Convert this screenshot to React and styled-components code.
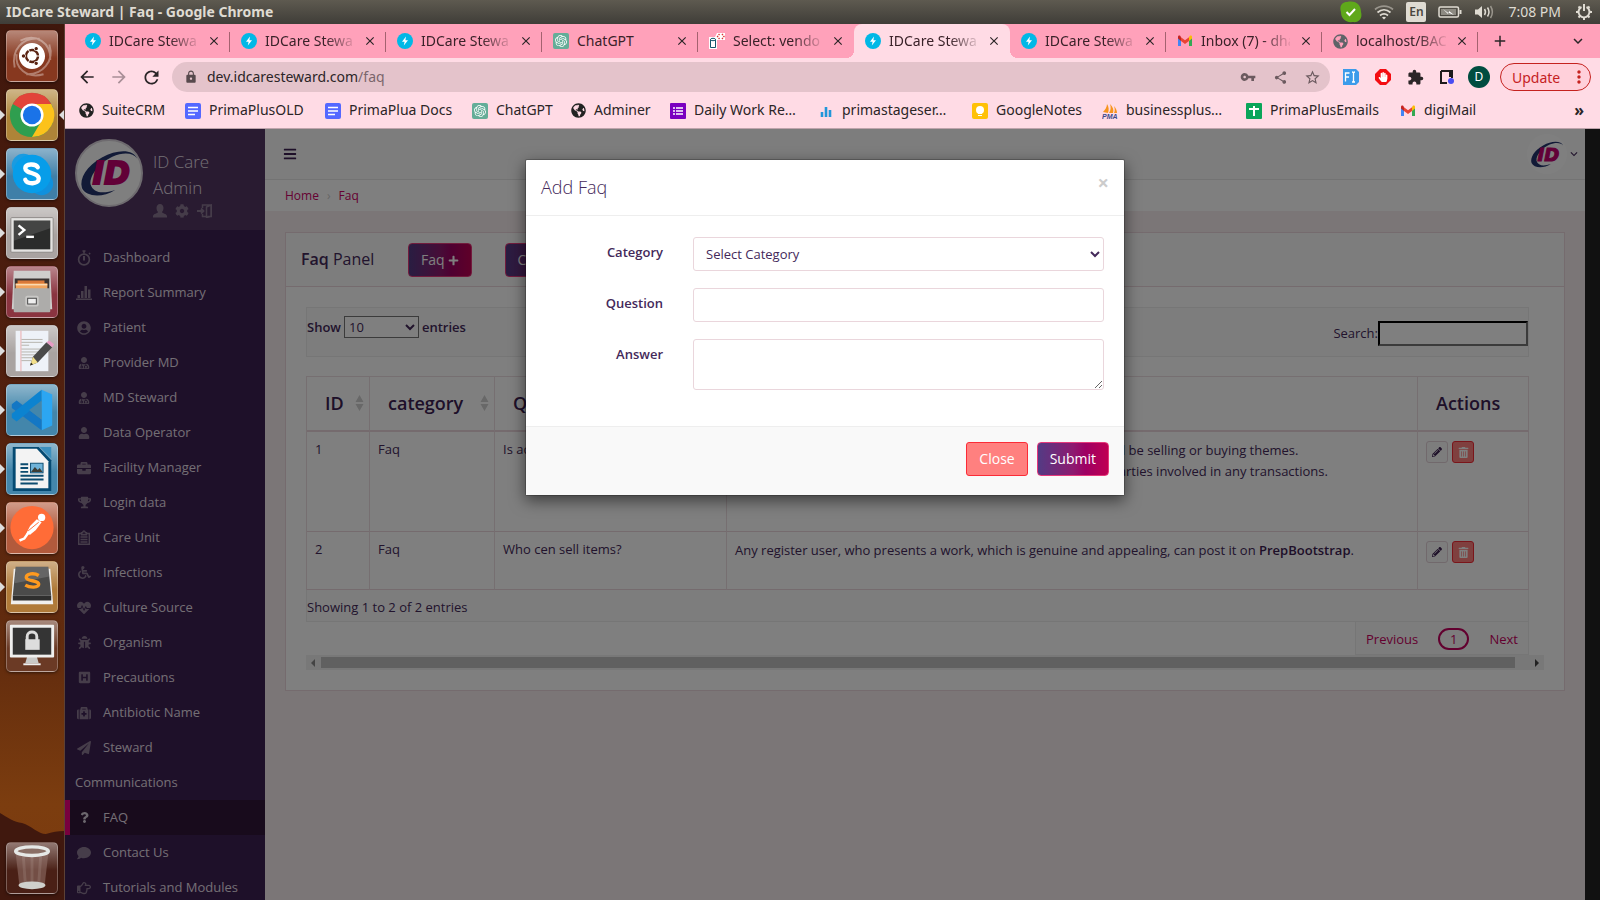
import React from "react";
import styled, { createGlobalStyle, css } from "styled-components";
import {
  FaUserMd, FaUser, FaBriefcase, FaTrophy, FaWheelchair, FaHeartbeat, FaBug, FaHSquare,
  FaMedkit, FaPaperPlane, FaQuestion, FaComment, FaRegHandPointRight, FaUserCircle, FaUbuntu,
  FaCog, FaBars, FaPlus, FaPencilAlt, FaTrashAlt, FaGlobeAmericas, FaHandPaper,
} from "react-icons/fa";
import {
  MdArrowBack, MdArrowForward, MdRefresh, MdLock, MdVpnKey, MdShare, MdStarBorder, MdExtension,
  MdClose, MdAdd, MdKeyboardArrowDown, MdMoreVert,
} from "react-icons/md";
import { SiOpenai } from "react-icons/si";

const GlobalStyle = createGlobalStyle`
  *, *::before, *::after { box-sizing: border-box; }
  body { margin: 0; background: #1e1029; }
  button, input, select, textarea { font: inherit; color: inherit; }
  a { color: inherit; text-decoration: none; }
  svg { display: block; flex: none; }
`;

const chromeFont = `"Noto Sans", "Open Sans", sans-serif`;
const pageFont = `"Open Sans", "Noto Sans", sans-serif`;

/* ---------- desktop shell ---------- */

const Desktop = styled.div`
  display: flex;
  flex-direction: column;
  height: 100vh;
  overflow: hidden;
  font-family: ${chromeFont};
`;

const SystemBar = styled.header`
  display: flex;
  align-items: center;
  justify-content: space-between;
  flex: none;
  height: 24px;
  padding: 0 7px 0 6px;
  background: linear-gradient(#5e5a50, #3f3d38);
  color: #dfdbd2;
  font-size: 14px;
`;

const WindowTitle = styled.strong`
  padding-bottom: 2px;
  font-weight: 700;
`;

const Indicators = styled.div`
  display: flex;
  align-items: center;
  gap: 12px;
`;

const Clock = styled.span`
  padding: 0 2px 2px;
`;

const InputLanguage = styled.span`
  width: 20px;
  height: 20px;
  border-radius: 2px;
  background: #dfdbd2;
  color: #4a4740;
  font-size: 12px;
  font-weight: 600;
  line-height: 20px;
  text-align: center;
`;

const Workspace = styled.div`
  display: flex;
  flex: 1;
  min-height: 0;
`;

const Launcher = styled.nav`
  position: relative;
  display: flex;
  flex-direction: column;
  flex: none;
  gap: 7px;
  width: 65px;
  padding: 6px;
  border-right: 1px solid #5c4136;
  background: linear-gradient(#3f170c 0, #4a1c0e 220px, #55230f 420px, #642d0e 640px, #7c3d0f 780px, #7a3a10 100%);
`;

const Hills = styled.svg`
  position: absolute;
  left: 0;
  bottom: 0;
  width: 64px;
  height: 94px;
`;

const LauncherItem = styled.button`
  position: relative;
  width: 52px;
  height: 52px;
  padding: 0;
  border: 1px solid rgba(255, 255, 255, 0.28);
  border-radius: 5px;
  background: linear-gradient(rgba(255, 255, 255, 0.4), rgba(255, 255, 255, 0) 55%), ${(p) => p.$tint};
  box-shadow: 0 1px 3px rgba(0, 0, 0, 0.5);
  ${(p) => p.$last && css`margin-top: auto;`}

  ${(p) => p.$running && css`
    &::before {
      content: "";
      position: absolute;
      left: -7px;
      top: 20px;
      border: 5px solid transparent;
      border-left-color: #ddd;
      border-right: 0;
    }
  `}
  ${(p) => p.$focused && css`
    &::after {
      content: "";
      position: absolute;
      right: -7px;
      top: 20px;
      border: 5px solid transparent;
      border-right-color: #ddd;
      border-left: 0;
    }
  `}
`;

/* ---------- browser ---------- */

const Browser = styled.div`
  display: flex;
  flex: 1;
  flex-direction: column;
  min-width: 0;
  background: #ffdbe5;
  color: #2b2527;
`;

const TabStrip = styled.div`
  display: flex;
  align-items: center;
  flex: none;
  height: 34px;
  padding: 0 12px 0 9px;
  background: #ffa1ba;
  color: #3a2229;
`;

const Tab = styled.div`
  position: relative;
  display: flex;
  align-items: center;
  gap: 8px;
  flex: 0 1 156px;
  min-width: 0;
  height: 34px;
  padding: 0 8px 0 11px;
  font-size: 14px;

  ${(p) => p.$divider && css`
    &::after {
      content: "";
      position: absolute;
      right: 0;
      top: 8px;
      width: 1px;
      height: 20px;
      background: #a4626f;
    }
  `}
  ${(p) => p.$active && css`
    border-radius: 8px 8px 0 0;
    background: #ffdbe5;
    &::before, &::after {
      content: "";
      position: absolute;
      bottom: 0;
      width: 8px;
      height: 8px;
    }
    &::before {
      left: -8px;
      background: radial-gradient(circle at 0 0, transparent 8px, #ffdbe5 8px);
    }
    &::after {
      right: -8px;
      background: radial-gradient(circle at 100% 0, transparent 8px, #ffdbe5 8px);
    }
  `}
`;

const TabTitle = styled.span`
  flex: 1;
  min-width: 0;
  padding-bottom: 2px;
  overflow: hidden;
  white-space: nowrap;
  ${(p) => p.$fade && css`mask-image: linear-gradient(to right, #000 68%, transparent 104%);`}
`;

const IconButton = styled.button`
  display: flex;
  align-items: center;
  justify-content: center;
  flex: none;
  width: ${(p) => p.$w || 16}px;
  height: ${(p) => p.$w || 16}px;
  padding: 0;
  border: 0;
  background: none;
  color: ${(p) => p.$color || "#2b2527"};
`;

const TabMenu = styled(IconButton)`
  margin-left: auto;
`;

const Toolbar = styled.div`
  display: flex;
  align-items: center;
  flex: none;
  gap: 10px;
  height: 38px;
  padding: 0 9px 0 11px;
`;

const Omnibox = styled.div`
  display: flex;
  align-items: center;
  flex: 1;
  gap: 9px;
  height: 30px;
  padding: 0 7px 0 12px;
  border-radius: 15px;
  background: #e4c3cb;
  color: #57494d;
`;

const Address = styled.div`
  flex: 1;
  padding-bottom: 2px;
  color: #2b2527;
  font-size: 14px;
  span { color: #7a666b; }
`;

const OmniActions = styled.div`
  display: flex;
  gap: 10px;
`;

const Extensions = styled.div`
  display: flex;
  align-items: center;
  gap: 10px;
`;

const Profile = styled.button`
  width: 22px;
  height: 22px;
  padding: 0;
  border: 0;
  border-radius: 50%;
  background: #004d40;
  color: #fff;
  font-size: 12px;
  line-height: 22px;
`;

const UpdateButton = styled.button`
  display: flex;
  align-items: center;
  justify-content: space-between;
  width: 91px;
  height: 28px;
  padding: 0 1px 0 11px;
  border: 1px solid #c5221f;
  border-radius: 14px;
  background: #ffd0da;
  color: #c5221f;
  font-size: 14px;
`;

const Bookmarks = styled.div`
  display: flex;
  align-items: center;
  flex: none;
  height: 33px;
  padding: 0 16px 3px 14px;
  border-bottom: 1px solid #bfa4ac;
  font-size: 14px;
`;

const Bookmark = styled.a`
  display: flex;
  align-items: center;
  flex: 0 1 ${(p) => p.$w}px;
  gap: 8px;
  white-space: nowrap;
  span { padding-bottom: 2px; }
`;

const MoreBookmarks = styled.button`
  margin-left: auto;
  padding: 0 0 2px;
  border: 0;
  background: none;
  font-size: 16px;
  font-weight: 700;
  line-height: 20px;
`;

/* ---------- site ---------- */

const Viewport = styled.div`
  display: flex;
  flex: 1;
  min-height: 0;
`;

const Site = styled.div`
  position: relative;
  display: flex;
  flex: 1;
  min-width: 0;
  overflow: hidden;
  background: #f6ecee;
  color: #44295a;
  font-family: ${pageFont};
  font-size: 13px;
  line-height: 19px;
`;

const PageScroll = styled.div`
  flex: none;
  width: 15px;
  background: #111;
`;

const Sidebar = styled.aside`
  flex: none;
  width: 200px;
  background: #3c2052;
  color: #e6dfe8;
`;

const UserCard = styled.div`
  display: flex;
  gap: 10px;
  height: 101px;
  padding: 10px;
  background: #523662;
`;

const UserName = styled.div`
  padding-top: 10px;
  font-size: 17px;
  font-weight: 300;
  line-height: 26px;
`;

const UserActions = styled.div`
  display: flex;
  gap: 8px;
  padding-top: 3px;
  color: #8b7893;
`;

const Menu = styled.ul`
  margin: 0;
  padding: 10px 0 0;
  list-style: none;
`;

const MenuLink = styled.a`
  display: block;
  padding: 0 15px 0 ${(p) => (p.$active ? 5 : 10)}px;
  line-height: 35px;
  ${(p) => p.$active && css`
    border-left: 5px solid #f0007c;
    background: #301638;
  `}
`;

const MenuIcon = styled.span`
  display: inline-flex;
  justify-content: center;
  width: 18px;
  margin-right: 10px;
  padding-bottom: 2px;
  vertical-align: middle;
  color: ${(p) => (p.$active ? "#d8cfdc" : "#8c7a94")};
`;

const Main = styled.main`
  flex: 1;
  min-width: 0;
`;

const SiteBar = styled.div`
  display: flex;
  align-items: center;
  justify-content: space-between;
  height: 51px;
  padding: 0 4px 0 18px;
  border-bottom: 1px solid #e6e6e6;
  background: #fafafa;
`;

const AccountButton = styled.button`
  display: flex;
  align-items: center;
  padding: 0;
  border: 0;
  background: none;
`;

const LogoDisc = styled.span`
  display: flex;
  align-items: center;
  justify-content: center;
  flex: none;
  width: ${(p) => p.$size}px;
  height: ${(p) => p.$size}px;
  border-radius: 50%;
  background: #fff;
  ${(p) => p.$ring && css`border: 2px solid #dcd6de;`}
`;

const Breadcrumb = styled.nav`
  display: flex;
  align-items: center;
  gap: 8px;
  height: 31px;
  padding: 0 20px;
  background: #fff;
  color: #cc0066;
  font-size: 12px;
  span { color: #ccc; }
`;

const Panel = styled.section`
  margin: 21px 20px;
  border: 1px solid #ead6dc;
  background: #fff;
`;

const PanelHead = styled.div`
  display: flex;
  align-items: center;
  height: 54px;
  padding: 0 15px;
  border-bottom: 1px solid #ead6dc;
  background: #fafafa;
`;

const PanelTitle = styled.h1`
  width: 107px;
  margin: 0;
  padding-bottom: 2px;
  font-size: 16px;
  font-weight: 400;
  line-height: 22px;
  b { font-weight: 600; }
`;

const HeadButtons = styled.div`
  display: flex;
  gap: 33px;
  padding-top: 1px;
`;

const GradientButton = styled.button`
  display: flex;
  align-items: center;
  gap: 3px;
  height: 34px;
  padding: 0 12px;
  border: 1px solid #e5397b;
  border-radius: 4px;
  background: linear-gradient(90deg, #533b84 0, #8d1a70 50%, #9e0063 68%, #bf0052 100%);
  color: #fff;
  font-size: 14px;
  line-height: 20px;
`;

const PanelBody = styled.div`
  padding: 20px;
`;

const TableArea = styled.div`
  padding-right: 15px;
`;

const Filters = styled.div`
  display: flex;
  justify-content: space-between;
  height: 50px;
  margin-bottom: 19px;
  border: 1px solid #ececec;
  background: #fafafa;
`;

const LengthFilter = styled.label`
  display: flex;
  align-items: center;
  gap: 3px;
  height: 38px;
  font-weight: 600;
`;

const LengthSelect = styled.select`
  width: 75px;
  height: 22px;
  padding: 0;
  border: 1px solid #767676;
  border-radius: 0;
  background-color: #fff;
  font-weight: 400;
`;

const SearchFilter = styled.label`
  display: flex;
  align-items: center;
  padding-top: 2px;
`;

const SearchInput = styled.input`
  width: 150px;
  height: 25px;
  padding: 1px 2px;
  border: 2px inset #767676;
  border-color: #222 #767676 #767676 #222;
  background: #fff;
`;

const DataTable = styled.table`
  width: 100%;
  table-layout: fixed;
  border-collapse: separate;
  border-spacing: 0;
  border: 1px solid #ecdfe3;
  border-width: 1px 0 0 1px;
`;

const HeadCell = styled.th`
  height: 55px;
  padding: 0 5px 2px 18px;
  border-right: 1px solid #ecdfe3;
  border-bottom: 2px solid #ead6dc;
  color: #3c2052;
  font-size: 18px;
  font-weight: 600;
  line-height: 24px;
  text-align: left;
`;

const HeadLabel = styled.div`
  display: flex;
  align-items: center;
  justify-content: space-between;
`;

const Cell = styled.td`
  height: ${(p) => p.$h}px;
  padding: 8px;
  border-right: 1px solid #ecdfe3;
  border-bottom: 1px solid #ead6dc;
  vertical-align: top;
  p { margin: 0; line-height: 21px; }
  b { font-weight: 600; color: #3c2052; }
`;

const RowActions = styled.div`
  display: flex;
  gap: 4px;
  padding-top: 1px;
`;

const RowButton = styled.button`
  display: flex;
  align-items: center;
  justify-content: center;
  width: 22px;
  height: 22px;
  padding: 0;
  border: 1px solid ${(p) => (p.$danger ? "#f52a35" : "#e3d2d8")};
  border-radius: 3px;
  background: ${(p) => (p.$danger ? "#ff807f" : "#fafafa")};
  color: ${(p) => (p.$danger ? "#fff" : "#3c2052")};
`;

const TableInfo = styled.div`
  height: 32px;
  padding: 8px 0 0;
  border: 1px solid #ececec;
  border-top: 0;
  background: #fafafa;
`;

const Pagination = styled.div`
  display: flex;
  align-items: center;
  justify-content: space-between;
  width: 174px;
  height: 33px;
  margin-left: auto;
  padding: 2px 10px 0;
  border: 1px solid #ececec;
  border-top: 0;
  background: #fafafa;
  color: #c8005f;
`;

const CurrentPage = styled.a`
  width: 31px;
  height: 22px;
  border: 2px solid #c4005e;
  border-radius: 11px;
  line-height: 18px;
  text-align: center;
`;

const ScrollTrack = styled.div`
  display: flex;
  align-items: center;
  justify-content: space-between;
  height: 15px;
  padding: 0 5px;
  background: #f1f1f1;
`;

const ScrollThumb = styled.div`
  flex: 1;
  height: 11px;
  margin: 0 20px 0 6px;
  background: #c1c1c1;
`;

/* ---------- dialog ---------- */

const Backdrop = styled.div`
  position: absolute;
  inset: 0;
  background: rgba(0, 0, 0, 0.5);
`;

const DialogLayer = styled.div`
  position: absolute;
  inset: 0;
  padding: 30px 20px;
`;

const Dialog = styled.form`
  max-width: 600px;
  margin: 0 auto;
  border: 1px solid rgba(0, 0, 0, 0.2);
  border-radius: 2px;
  background: #fff;
  background-clip: padding-box;
  box-shadow: 0 5px 15px rgba(0, 0, 0, 0.5);
`;

const DialogHead = styled.div`
  display: flex;
  align-items: flex-start;
  justify-content: space-between;
  height: 56px;
  padding: 15px;
  border-bottom: 1px solid #eee;
`;

const DialogTitle = styled.h2`
  margin: 0;
  font-size: 18px;
  font-weight: 300;
  line-height: 24px;
`;

const DialogClose = styled.button`
  padding: 0;
  border: 0;
  background: none;
  color: #ccc;
  font-size: 20px;
  font-weight: 700;
  line-height: 16px;
`;

const DialogBody = styled.div`
  display: flex;
  flex-direction: column;
  gap: 17px;
  padding: 21px 20px 36px;
`;

const Field = styled.div`
  display: grid;
  grid-template-columns: 117px 1fr;
  column-gap: 30px;
  label {
    padding-top: 6px;
    font-weight: 600;
    text-align: right;
  }
`;

const control = css`
  display: block;
  width: 100%;
  height: 34px;
  padding: 6px 12px;
  border: 1px solid #ead6dc;
  border-radius: 3px;
  background-color: #fff;
`;

const SelectControl = styled.select`
  ${control}
  padding: 6px 8px;
`;
const TextControl = styled.input`${control}`;
const AreaControl = styled.textarea`
  ${control}
  height: 51px;
  resize: vertical;
`;

const DialogFoot = styled.div`
  display: flex;
  align-items: center;
  justify-content: flex-end;
  gap: 9px;
  height: 69px;
  padding: 0 15px 5px;
  border-top: 1px solid #eee;
  background: #f9f9f9;
`;

const CloseButton = styled.button`
  height: 34px;
  padding: 0 12px;
  border: 1px solid #fb2b37;
  border-radius: 3px;
  background: #ff807f;
  color: #fff;
  font-size: 14px;
  line-height: 20px;
`;

/* ---------- drawings ---------- */

const Logo = ({ width }) => (
  <svg width={width} height={(width * 48) / 60} viewBox="0 0 60 48" overflow="visible" aria-label="ID Care">
    <path d="M59 9C55-1 38-1 22 8C6 17-2 30 1 40C5 49 22 51 36 42C24 46 13 46 10 36C9 26 20 13 33 7C45 2 55 3 59 9Z" fill="#25356f" />
    <text x="12" y="36" fontFamily="DejaVu Sans, sans-serif" fontSize="33" fontWeight="700" fontStyle="italic" fill="#c4006f" stroke="#c4006f" strokeWidth="2">ID</text>
  </svg>
);

const Bolt = () => (
  <svg width="16" height="16" viewBox="0 0 16 16"><circle cx="8" cy="8" r="8" fill="#00b8e6" /><path d="M9 3.5L5 8.7h2.6L6.8 12.6 11 7.3H8.4z" fill="#fff" /></svg>
);
const Gpt = () => (
  <svg width="16" height="16" viewBox="0 0 16 16"><rect width="16" height="16" rx="2" fill="#64ad98" /><g transform="translate(2 2)"><SiOpenai size={12} color="#fff" /></g></svg>
);
const Gmail = () => (
  <svg width="16" height="16" viewBox="0 0 16 16">
    <path d="M1 4v9h3V6z" fill="#4285f4" /><path d="M12 6v7h3V4z" fill="#34a853" />
    <path d="M12 4.3V8l3-2.4V4c0-1.4-1.5-1.8-2.4-1z" fill="#fbbc04" />
    <path d="M4 8V4.3l4 3 4-3V8l-4 3z" fill="#ea4335" /><path d="M1 4v1.6L4 8V4.3L3.400 3C2.500 2.200 1 2.600 1 4z" fill="#c5221f" />
  </svg>
);
const Database = () => (
  <svg width="16" height="16" viewBox="0 0 16 16" fill="none">
    <path d="M0 4h6L8 0h8v7H8v9H0z" fill="#fff" />
    <path d="M1.500 6.500h5v8h-5z" stroke="#12566b" /><ellipse cx="4" cy="6.500" rx="2.500" ry="1.200" fill="#fff" stroke="#12566b" />
    <path d="M10.500 1L8.500 3.500l2 2.500M13 1l2 2.500L13 6" stroke="#d33" strokeWidth="1.300" strokeDasharray="1.500 1" />
  </svg>
);
const Docs = () => (
  <svg width="16" height="16" viewBox="0 0 16 16"><rect width="16" height="16" rx="2" fill="#5468ff" /><path d="M3 4.500h10M3 8h10M3 11.500h7" stroke="#fff" strokeWidth="1.500" /></svg>
);
const ListIcon = () => (
  <svg width="16" height="16" viewBox="0 0 16 16"><rect width="16" height="16" rx="1" fill="#7a00c0" /><path d="M3 5h2M6 5h7M3 8h2M6 8h7M3 11h2M6 11h7" stroke="#fff" strokeWidth="1.600" /></svg>
);
const Bars = () => (
  <svg width="16" height="16" viewBox="0 0 16 16"><path d="M4 9v5M8 4v10M12 7v7" stroke="#2196d9" strokeWidth="2.600" /></svg>
);
const Keep = () => (
  <svg width="16" height="16" viewBox="0 0 16 16"><rect width="16" height="16" rx="2" fill="#ffc107" /><circle cx="8" cy="7" r="4" fill="#fff" /><path d="M6 9h4v2H6zM6 12h4v1H6z" fill="#fff" /></svg>
);
const Pma = () => (
  <svg width="16" height="16" viewBox="0 0 16 16">
    <path d="M1 9C3 7 5 4 5 1C7 4 7 7 6 10zM7 10C9 7 9 4 8 1C11 4 12 7 11 10zM12 10C13 8 13 6 12 3C14 5 15 8 15 10z" fill="#f7941d" />
    <text x="0" y="16" fontFamily="Liberation Sans, sans-serif" fontSize="7" fontWeight="700" fontStyle="italic" fill="#3c4a8c">PMA</text>
  </svg>
);
const Sheet = () => (
  <svg width="16" height="16" viewBox="0 0 16 16"><rect width="16" height="16" rx="1" fill="#0aa55a" /><path d="M3 6h10M8 3v10" stroke="#fff" strokeWidth="2" /></svg>
);
const SidePanel = () => (
  <svg width="16" height="16" viewBox="0 0 16 16"><path d="M2 2h11v7M8 14H2V2" fill="none" stroke="#1d1b1c" strokeWidth="2" /><path d="M10 2h4v6h-4z" fill="#1d1b1c" /><circle cx="12" cy="12" r="3" fill="#4a4cf2" /></svg>
);
const FontTool = () => (
  <svg width="16" height="16" viewBox="0 0 16 16"><path d="M0 0h13l3 3v10l-3 3H0z" fill="#3d9bea" /><path d="M2.500 12.500V4h4M2.500 8H6M9 3c1 0 1.500.4 1.500 1v8c0 .6-.5 1-1.500 1M12 3c-1 0-1.500.4-1.500 1M12 13c-1 0-1.500-.4-1.500-1" fill="none" stroke="#fff" strokeWidth="1.300" /></svg>
);
const AdStop = () => (
  <svg width="16" height="16" viewBox="0 0 16 16"><path d="M5 0h6l5 5v6l-5 5H5l-5-5V5z" fill="#f40d12" /><g transform="translate(3 3)"><FaHandPaper size={10} color="#fff" /></g></svg>
);

const StatusCheck = () => (
  <svg width="22" height="22" viewBox="0 0 22 22"><path d="M7 1C16-1 21 4 21 11C23 18 18 22 13 21C5 22 1 17 1 11C-1 5 2 1 7 1Z" fill="#5fa81b" /><path d="M6.500 11l3 3 5.500-6" fill="none" stroke="#fff" strokeWidth="2" /></svg>
);
const Wifi = () => (
  <svg width="20" height="18" viewBox="0 0 20 18" fill="none" stroke="#dfdbd2" strokeWidth="1.700"><path d="M1 6.500C6 2 14 2 19 6.500" stroke="#99958c" /><path d="M3.500 9.500c4-3.500 9-3.500 13 0M6 12.500c2.500-2 5.500-2 8 0" /><path d="M8 14.500c1.300-1 2.700-1 4 0l-2 2z" fill="#dfdbd2" stroke="none" /></svg>
);
const Battery = () => (
  <svg width="24" height="14" viewBox="0 0 24 14"><rect x="1" y="2" width="19.500" height="10" rx="1.500" fill="none" stroke="#dfdbd2" strokeWidth="1.500" /><path d="M21.500 5h2v4h-2z" fill="#dfdbd2" /><path d="M3 4h15v6H3z" fill="#8d8a82" /><path d="M5 4l6 4.500V6l5 4-6-2.500V9z" fill="#fff" /></svg>
);
const Volume = () => (
  <svg width="20" height="16" viewBox="0 0 20 16" fill="none" stroke="#dfdbd2" strokeWidth="1.500"><path d="M1 5.500h3L8 2v12L4 10.500H1z" fill="#dfdbd2" stroke="none" /><path d="M10.500 5c1.300 2 1.300 4 0 6M13.500 3.500c2 3 2 6 0 9" /><path d="M16.500 2c2.500 4 2.500 8 0 12" stroke="#99958c" /></svg>
);
const PowerGear = () => (
  <svg width="18" height="18" viewBox="0 0 18 18" fill="none" stroke="#dfdbd2"><path d="M6.500 4A5.500 5.500 0 1 0 11.500 4" strokeWidth="2" /><path d="M9 1v7" strokeWidth="2" /><path d="M3.500 3.500l2 2M14.500 3.500l-2 2M1 9h3M17 9h-3M3.500 14.500l2-2M14.500 14.500l-2-2M9 17v-3" strokeWidth="2" /></svg>
);

const Timer = () => (
  <svg width="15" height="16" viewBox="0 0 15 16" fill="none" stroke="currentColor"><circle cx="7" cy="9.500" r="5.400" strokeWidth="1.700" /><path d="M5.500 1h3M7 1v2.500M12 3l1.200 1.200" strokeWidth="1.600" /><path d="M7 6v4.500" strokeWidth="2" /></svg>
);
const ChartGlyph = () => (
  <svg width="16" height="15" viewBox="0 0 16 15" fill="currentColor"><path d="M0 13.500h16V15H0zM1.500 10H4v3H1.500zM5 6h2.500v7H5zM8.500 1H11v12H8.500zM12 4.500h2.500V13H12z" /></svg>
);
const Clipboard = () => (
  <svg width="14" height="15" viewBox="0 0 14 15" fill="none" stroke="currentColor" strokeWidth="1.400"><path d="M4 3.500H1.700v10.800h10.600V3.500H10M4.500 2.800h1.200c0-2.500 2.600-2.500 2.600 0h1.200v2h-5z" /><path d="M3.500 7h7M3.500 9.500h7M3.500 12h7" /></svg>
);
const PersonGlyph = () => (
  <svg width="14" height="14" viewBox="0 0 14 14" fill="currentColor"><path d="M7 0c2.200 0 3.500 1.800 3.500 4 0 1.800-.8 3.300-1.500 4 .2 1.500 4.500 1.700 5 4v1.500H0V12c.5-2.300 4.800-2.500 5-4-.7-.7-1.500-2.200-1.500-4C3.500 1.800 4.800 0 7 0z" /></svg>
);
const ExitGlyph = () => (
  <svg width="15" height="14" viewBox="0 0 15 14" fill="none" stroke="currentColor" strokeWidth="1.500"><path d="M5.500 4V1h9v11.500h-4M5.500 10v2.500H9M9.500 3L14 1v11.500l-4.500 1z" /><path d="M0 7h6M4 4.500L6.500 7 4 9.500" strokeWidth="1.800" /></svg>
);
const SortGlyph = () => (
  <svg width="9" height="16" viewBox="0 0 9 16" fill="#d0d0d0"><path d="M4.500 0L8.500 7h-8zM4.500 16l4-7h-8z" /></svg>
);

const art = { width: 50, height: 50, viewBox: "0 0 52 52" };

const ChromeArt = () => (
  <svg {...art}>
    <circle cx="26" cy="26" r="23" fill="#2f9e4f" />
    <path d="M26 26L6 14.500A23 23 0 0 1 46 14.500H26z" fill="#e2443a" />
    <path d="M26 14.500h20A23 23 0 0 1 26 49L36 32z" fill="#fcc21b" />
    <circle cx="26" cy="26" r="12" fill="#fff" /><circle cx="26" cy="26" r="9.500" fill="#1a73e8" />
  </svg>
);
const UbuntuArt = () => (
  <svg {...art}>
    <path d="M8 38C4 20 16 6 34 8M44 14c6 18-8 32-24 31M14 10C30 2 46 12 45 30M38 45C20 50 8 38 10 24" fill="none" stroke="#fff" strokeOpacity=".35" strokeWidth="2" />
    <g transform="translate(12 12)"><circle cx="14" cy="14" r="12" fill="#5a2412" /><FaUbuntu size={28} color="#fff" /></g>
  </svg>
);
const SkypeArt = () => (
  <svg {...art}>
    <circle cx="17" cy="17" r="12" fill="#1a9be0" /><circle cx="36" cy="36" r="12" fill="#1090dd" /><circle cx="26" cy="26" r="20" fill="#079de9" />
    <path d="M32 19c-2-4-13-4-13 1 0 6 14 4 14 11 0 6-12 6-14 1" fill="none" stroke="#fff" strokeWidth="4.500" strokeLinecap="round" />
  </svg>
);
const TerminalArt = () => (
  <svg {...art}>
    <rect x="4" y="10" width="44" height="36" rx="1" fill="#e4e3e1" stroke="#8b8885" /><rect x="7" y="13" width="38" height="30" fill="#2b2c2b" />
    <path d="M7 13h38v8L7 34z" fill="#fff" opacity=".12" /><path d="M12 18l6 5-6 5" fill="none" stroke="#fff" strokeWidth="2.500" /><path d="M20 30h8" stroke="#fff" strokeWidth="2.500" />
  </svg>
);
const FilesArt = () => (
  <svg {...art}>
    <path d="M7 4h38l2 40H5z" fill="#cfcecc" /><path d="M8 12h36v12H8z" fill="#3a3230" /><path d="M11 14h28v7H11z" fill="#d9793a" /><path d="M9 17h33v6H9z" fill="#f0a45e" /><path d="M9 18.500h33" stroke="#fff3d8" />
    <rect x="7" y="22" width="38" height="25" rx="1" fill="#adacaa" /><rect x="19" y="30" width="14" height="11" rx="2" fill="#c9c8c6" /><rect x="21.500" y="32.500" width="9" height="6" fill="#eee" stroke="#444" />
  </svg>
);
const NotesArt = () => (
  <svg {...art}>
    <rect x="9" y="5" width="34" height="42" fill="#eef2f8" /><path d="M14.500 5v42" stroke="#eba9a9" />
    <path d="M15 14h22M15 17h22M15 20h8M15 24h22M15 27h20M15 30h16M15 33h14M15 36h10" stroke="#b5b3ad" />
    <path d="M24 41l3-9L41 17l6 5-15 16z" fill="#4a4a4a" /><path d="M24 41l3-9 5 6z" fill="#f3e08a" /><path d="M24 41l1-3 2 2z" fill="#222" /><path d="M41 17l3-2 5 4-2 3z" fill="#e79bc4" />
  </svg>
);
const CodeArt = () => (
  <svg {...art}>
    <path d="M36 5l11 5v32l-11 5z" fill="#2ca6f2" /><path d="M5 20l5-4 26 20v11L5 24z" fill="#1477c4" /><path d="M5 34l5 4 26-21V5L5 30z" fill="#0c83d0" /><path d="M36 16v20L23 26z" fill="#4386ab" />
  </svg>
);
const WriterArt = () => (
  <svg {...art}>
    <path d="M6 3h27l13 14v32H6z" fill="#054a72" /><path d="M9 5h22l12 13v28H9z" fill="#f3f3f3" /><path d="M34 3l12 12V3z" fill="#3c8fbd" />
    <path d="M14 21h8M14 25h8M14 29h8M14 33h24M14 37h24M14 41h18" stroke="#0c4c70" strokeWidth="2" /><rect x="24.500" y="20" width="13" height="10" fill="#6fb3d9" stroke="#0c4c70" /><path d="M25 29l4-5 3 3 2-2 3 4z" fill="#3d3d35" />
  </svg>
);
const PostmanArt = () => (
  <svg {...art}>
    <circle cx="26" cy="25.500" r="22.500" fill="#ff6c37" /><circle cx="36" cy="15" r="3.800" fill="#fff" />
    <path d="M31 17l5 3-6 8-6 5-4-1 4-8z" fill="#fff" /><path d="M23 30l-5 7-5 2" stroke="#fff" strokeWidth="2.600" fill="none" /><path d="M22 29l11-9" stroke="#ff6c37" />
  </svg>
);
const SublimeArt = () => (
  <svg {...art}>
    <path d="M7 7h38l3 37H4z" fill="#f0efed" /><path d="M9 5h34l3 30H6z" fill="#4b4b4a" /><path d="M6 35h40v5H6z" fill="#2f2f2e" /><path d="M9 5h34l1 10L8 22z" fill="#fff" opacity=".15" />
    <path d="M33 14c-5-3-13-2-13 2 0 4 13 3 13 7 0 4-9 4-14 1" fill="none" stroke="#ff9a1f" strokeWidth="3.500" />
  </svg>
);
const LockArt = () => (
  <svg {...art}>
    <path d="M21 37h10l2 7H19z" fill="#c9c9c7" /><path d="M17 44h18v2H17z" fill="#eee" /><rect x="3" y="4" width="46" height="34" rx="1" fill="#efefee" /><rect x="6" y="7" width="40" height="28" fill="#343434" />
    <path d="M21 20v-4c0-6 10-6 10 0v4" fill="none" stroke="#ddd" strokeWidth="3" /><rect x="19" y="19" width="15" height="11" fill="#ddd" />
  </svg>
);
const TrashArt = () => (
  <svg {...art}>
    <path d="M9 11h34l-4 34H13z" fill="#9c7c73" opacity=".5" /><path d="M17 14l2 28M26 14v28M35 14l-2 28" stroke="#d9c8c2" strokeOpacity=".15" strokeWidth="3" />
    <ellipse cx="26" cy="44" rx="14" ry="4" fill="#cfd0cc" /><ellipse cx="26" cy="8.500" rx="17" ry="4.500" fill="#8a6f66" stroke="#e6e8e6" strokeWidth="3.500" />
  </svg>
);

/* ---------- data ---------- */

const globe = (color) => <FaGlobeAmericas size={15} color={color} />;

const tabs = [
  { title: "IDCare Stewa", icon: <Bolt />, divider: true, fade: true },
  { title: "IDCare Stewa", icon: <Bolt />, divider: true, fade: true },
  { title: "IDCare Stewa", icon: <Bolt />, divider: true, fade: true },
  { title: "ChatGPT", icon: <Gpt />, divider: true },
  { title: "Select: vendo", icon: <Database />, fade: true },
  { title: "IDCare Stewa", icon: <Bolt />, active: true, fade: true },
  { title: "IDCare Stewa", icon: <Bolt />, divider: true, fade: true },
  { title: "Inbox (7) - dha", icon: <Gmail />, divider: true, fade: true },
  { title: "localhost/BAC", icon: globe("#5f6368"), divider: true, fade: true },
];

const bookmarks = [
  { name: "SuiteCRM", icon: globe("#222"), w: 106 },
  { name: "PrimaPlusOLD", icon: <Docs />, w: 140 },
  { name: "PrimaPlua Docs", icon: <Docs />, w: 147 },
  { name: "ChatGPT", icon: <Gpt />, w: 99 },
  { name: "Adminer", icon: globe("#222"), w: 99 },
  { name: "Daily Work Re…", icon: <ListIcon />, w: 148 },
  { name: "primastageser…", icon: <Bars />, w: 154 },
  { name: "GoogleNotes", icon: <Keep />, w: 130 },
  { name: "businessplus…", icon: <Pma />, w: 144 },
  { name: "PrimaPlusEmails", icon: <Sheet />, w: 154 },
  { name: "digiMail", icon: <Gmail />, w: 90 },
];

const launcherItems = [
  { name: "Search", art: <UbuntuArt />, tint: "#87381f" },
  { name: "Google Chrome", art: <ChromeArt />, tint: "#ae8438", running: true, focused: true },
  { name: "Skype", art: <SkypeArt />, tint: "#3f7fa8", running: true },
  { name: "Terminal", art: <TerminalArt />, tint: "#a9a3a1", running: true },
  { name: "Files", art: <FilesArt />, tint: "#8a3440", running: true },
  { name: "Text Editor", art: <NotesArt />, tint: "#a9a3a1", running: true },
  { name: "Code", art: <CodeArt />, tint: "#4386ab", running: true },
  { name: "Writer", art: <WriterArt />, tint: "#4386ab", running: true },
  { name: "Postman", art: <PostmanArt />, tint: "#b25a3c", running: true },
  { name: "Sublime Text", art: <SublimeArt />, tint: "#b07a38", running: true },
  { name: "Lock Screen", art: <LockArt />, tint: "#6b3a25" },
  { name: "Trash", art: <TrashArt />, tint: "#4a2016", last: true },
];

const menu = [
  ["Dashboard", <Timer />],
  ["Report Summary", <ChartGlyph />],
  ["Patient", <FaUserCircle size={14} />],
  ["Provider MD", <FaUserMd size={12} />],
  ["MD Steward", <FaUserMd size={12} />],
  ["Data Operator", <FaUser size={12} />],
  ["Facility Manager", <FaBriefcase size={14} />],
  ["Login data", <FaTrophy size={13} />],
  ["Care Unit", <Clipboard />],
  ["Infections", <FaWheelchair size={13} />],
  ["Culture Source", <FaHeartbeat size={14} />],
  ["Organism", <FaBug size={13} />],
  ["Precautions", <FaHSquare size={13} />],
  ["Antibiotic Name", <FaMedkit size={14} />],
  ["Steward Communications", <FaPaperPlane size={14} />],
  ["FAQ", <FaQuestion size={11} />, true],
  ["Contact Us", <FaComment size={14} />],
  ["Tutorials and Modules", <FaRegHandPointRight size={14} />],
];

const faqs = [
  {
    id: 1,
    category: "Faq",
    question: "Is account registration required?",
    height: 100,
    answer: (
      <>
        <p>Account registration at <b>PrepBootstrap</b> is only required if you will be selling or buying themes.</p>
        <p>This also ensures a valid communication channel for all of the parties involved in any transactions.</p>
      </>
    ),
  },
  {
    id: 2,
    category: "Faq",
    question: "Who cen sell items?",
    height: 58,
    answer: <p>Any register user, who presents a work, which is genuine and appealing, can post it on <b>PrepBootstrap</b>.</p>,
  },
];

const columns = ["ID", "category", "Question", "Answer", "Actions"];

/* ---------- views ---------- */

const SystemPanel = () => (
  <SystemBar>
    <WindowTitle>IDCare Steward | Faq - Google Chrome</WindowTitle>
    <Indicators>
      <StatusCheck />
      <Wifi />
      <InputLanguage>En</InputLanguage>
      <Battery />
      <Volume />
      <Clock>7:08 PM</Clock>
      <PowerGear />
    </Indicators>
  </SystemBar>
);

const Dock = () => (
  <Launcher aria-label="Launcher">
    <Hills viewBox="0 0 64 94"><path d="M0 7C8 12 14 16 22 17C32 20 38 28 46 28C52 26 58 25 64 25V94H0Z" fill="#40180e" /></Hills>
    {launcherItems.map((item) => (
      <LauncherItem key={item.name} aria-label={item.name} $tint={item.tint} $running={item.running} $focused={item.focused} $last={item.last}>
        {item.art}
      </LauncherItem>
    ))}
  </Launcher>
);

const BrowserChrome = () => (
  <>
    <TabStrip>
      {tabs.map((tab, i) => (
        <Tab key={i} $active={tab.active} $divider={tab.divider}>
          {tab.icon}
          <TabTitle $fade={tab.fade}>{tab.title}</TabTitle>
          <IconButton aria-label="Close tab"><MdClose size={14} /></IconButton>
        </Tab>
      ))}
      <IconButton $w={44} aria-label="New tab"><MdAdd size={18} /></IconButton>
      <TabMenu $w={20} aria-label="Search tabs"><MdKeyboardArrowDown size={18} /></TabMenu>
    </TabStrip>
    <Toolbar>
      <IconButton $w={22} aria-label="Back"><MdArrowBack size={20} /></IconButton>
      <IconButton $w={22} $color="#a98f97" aria-label="Forward"><MdArrowForward size={20} /></IconButton>
      <IconButton $w={22} aria-label="Reload"><MdRefresh size={21} /></IconButton>
      <Omnibox>
        <MdLock size={14} />
        <Address>dev.idcaresteward.com<span>/faq</span></Address>
        <OmniActions>
          <IconButton $w={22} $color="#6b5a5f" aria-label="Passwords"><MdVpnKey size={16} /></IconButton>
          <IconButton $w={22} $color="#6b5a5f" aria-label="Share"><MdShare size={15} /></IconButton>
          <IconButton $w={22} $color="#6b5a5f" aria-label="Bookmark"><MdStarBorder size={17} /></IconButton>
        </OmniActions>
      </Omnibox>
      <Extensions>
        <IconButton $w={22} aria-label="Font tool"><FontTool /></IconButton>
        <IconButton $w={22} aria-label="Ad blocker"><AdStop /></IconButton>
        <IconButton $w={22} aria-label="Extensions"><MdExtension size={17} /></IconButton>
        <IconButton $w={22} aria-label="Side panel"><SidePanel /></IconButton>
        <Profile>D</Profile>
      </Extensions>
      <UpdateButton>Update<MdMoreVert size={20} /></UpdateButton>
    </Toolbar>
    <Bookmarks>
      {bookmarks.map((b) => (
        <Bookmark key={b.name} href="#" $w={b.w}>{b.icon}<span>{b.name}</span></Bookmark>
      ))}
      <MoreBookmarks>»</MoreBookmarks>
    </Bookmarks>
  </>
);

const SideNav = () => (
  <Sidebar>
    <UserCard>
      <LogoDisc $size={68} $ring><Logo width={57} /></LogoDisc>
      <UserName>
        ID Care<br />Admin
        <UserActions><PersonGlyph /><FaCog size={14} /><ExitGlyph /></UserActions>
      </UserName>
    </UserCard>
    <Menu>
      {menu.map(([label, icon, active]) => (
        <li key={label}>
          <MenuLink href="#" $active={active}><MenuIcon $active={active}>{icon}</MenuIcon>{label}</MenuLink>
        </li>
      ))}
    </Menu>
  </Sidebar>
);

const FaqTable = () => (
  <DataTable>
    <colgroup>
      <col width="63" /><col width="125" /><col width="232" /><col /><col width="111" />
    </colgroup>
    <thead>
      <tr>
        {columns.map((name) => (
          <HeadCell key={name} scope="col">
            <HeadLabel>{name}{name !== "Actions" && name !== "Answer" && <SortGlyph />}</HeadLabel>
          </HeadCell>
        ))}
      </tr>
    </thead>
    <tbody>
      {faqs.map((faq) => (
        <tr key={faq.id}>
          <Cell $h={faq.height}>{faq.id}</Cell>
          <Cell>{faq.category}</Cell>
          <Cell>{faq.question}</Cell>
          <Cell>{faq.answer}</Cell>
          <Cell>
            <RowActions>
              <RowButton aria-label="Edit"><FaPencilAlt size={10} /></RowButton>
              <RowButton $danger aria-label="Delete"><FaTrashAlt size={11} /></RowButton>
            </RowActions>
          </Cell>
        </tr>
      ))}
    </tbody>
  </DataTable>
);

const FaqPage = () => (
  <Main>
    <SiteBar>
      <IconButton $w={14} $color="#3c2052" aria-label="Toggle menu"><FaBars size={14} /></IconButton>
      <AccountButton aria-label="Account"><LogoDisc $size={40}><Logo width={33} /></LogoDisc><MdKeyboardArrowDown size={14} /></AccountButton>
    </SiteBar>
    <Breadcrumb><a href="#">Home</a><span>›</span><a href="#">Faq</a></Breadcrumb>
    <Panel>
      <PanelHead>
        <PanelTitle><b>Faq</b> Panel</PanelTitle>
        <HeadButtons>
          <GradientButton>Faq <FaPlus size={11} /></GradientButton>
          <GradientButton>Category <FaPlus size={11} /></GradientButton>
        </HeadButtons>
      </PanelHead>
      <PanelBody>
        <TableArea>
          <Filters>
            <LengthFilter>Show <LengthSelect defaultValue="10"><option>10</option><option>25</option></LengthSelect> entries</LengthFilter>
            <SearchFilter>Search:<SearchInput type="search" /></SearchFilter>
          </Filters>
          <FaqTable />
          <TableInfo>Showing 1 to 2 of 2 entries</TableInfo>
          <Pagination><a href="#">Previous</a><CurrentPage href="#">1</CurrentPage><a href="#">Next</a></Pagination>
        </TableArea>
        <ScrollTrack>
          <svg width="4" height="8" viewBox="0 0 4 8"><path d="M4 0v8L0 4z" fill="#888" /></svg>
          <ScrollThumb />
          <svg width="4" height="8" viewBox="0 0 4 8"><path d="M0 0v8l4-4z" fill="#444" /></svg>
        </ScrollTrack>
      </PanelBody>
    </Panel>
  </Main>
);

const AddFaqDialog = () => (
  <DialogLayer>
    <Dialog role="dialog" aria-labelledby="add-faq-title">
      <DialogHead>
        <DialogTitle id="add-faq-title">Add Faq</DialogTitle>
        <DialogClose type="button" aria-label="Close dialog">×</DialogClose>
      </DialogHead>
      <DialogBody>
        <Field>
          <label htmlFor="faq-category">Category</label>
          <SelectControl id="faq-category"><option>Select Category</option></SelectControl>
        </Field>
        <Field>
          <label htmlFor="faq-question">Question</label>
          <TextControl id="faq-question" type="text" />
        </Field>
        <Field>
          <label htmlFor="faq-answer">Answer</label>
          <AreaControl id="faq-answer" />
        </Field>
      </DialogBody>
      <DialogFoot>
        <CloseButton type="button">Close</CloseButton>
        <GradientButton type="button">Submit</GradientButton>
      </DialogFoot>
    </Dialog>
  </DialogLayer>
);

export default function App() {
  return (
    <Desktop>
      <GlobalStyle />
      <SystemPanel />
      <Workspace>
        <Dock />
        <Browser>
          <BrowserChrome />
          <Viewport>
            <Site>
              <SideNav />
              <FaqPage />
              <Backdrop />
              <AddFaqDialog />
            </Site>
            <PageScroll />
          </Viewport>
        </Browser>
      </Workspace>
    </Desktop>
  );
}
